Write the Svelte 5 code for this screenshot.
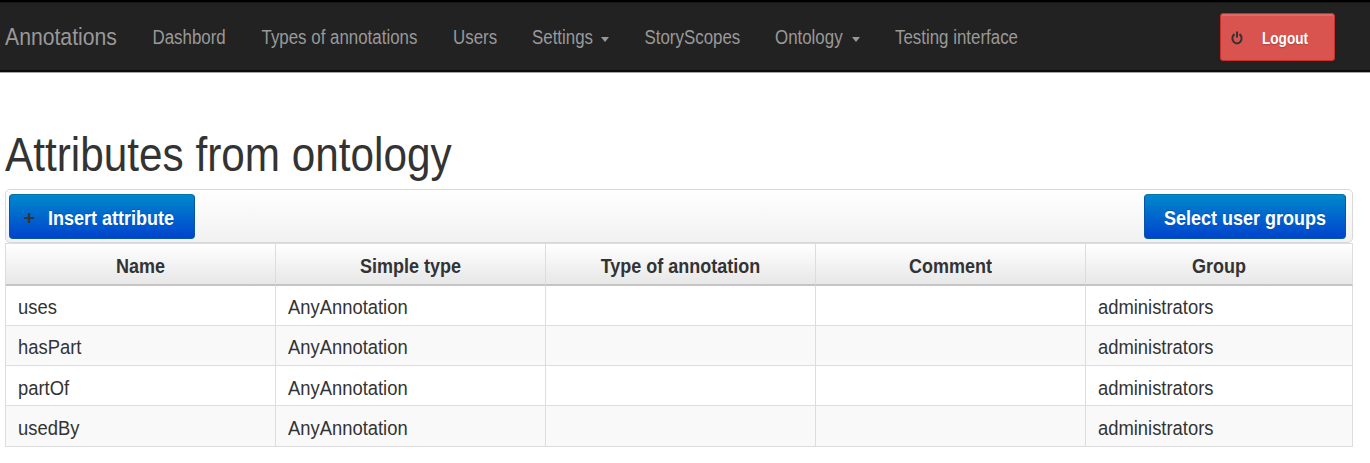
<script>
  const links = [
    { label: 'Dashbord', width: 73.5 },
    { label: 'Types of annotations', width: 156 },
    { label: 'Users', width: 43.5 },
    { label: 'Settings', width: 77, menu: true },
    { label: 'StoryScopes', width: 95 },
    { label: 'Ontology', width: 84.5, menu: true },
    { label: 'Testing interface', width: 124 }
  ];
  const columns = ['Name', 'Simple type', 'Type of annotation', 'Comment', 'Group'];
  const names = ['uses', 'hasPart', 'partOf', 'usedBy'];
</script>

<nav>
  <a class="brand"><span class="t">Annotations</span></a>
  <div class="links">
    {#each links as link}
      <a style="width: {link.width}px"><span class="t">{link.label}</span>{#if link.menu}<i class="caret"></i>{/if}</a>
    {/each}
  </div>
  <button class="logout">
    <svg width="12" height="14" viewBox="0 0 12 14" preserveAspectRatio="none">
      <path d="M3.5 3.1A4.6 5.1 0 1 0 8.5 3.1M6 .5V6.6" fill="none" stroke="#333" stroke-width="2" />
    </svg>
    <span class="t">Logout</span>
  </button>
</nav>

<main>
  <h1><span class="t">Attributes from ontology</span></h1>
  <div class="toolbar">
    <button class="blue insert">
      <svg width="10" height="12" viewBox="0 0 10 12"><path d="M5 1V11M0 6H10" stroke="#333" stroke-width="2.2" /></svg>
      <span class="t">Insert attribute</span>
    </button>
    <button class="blue select"><span class="t">Select user groups</span></button>
  </div>
  <div class="table">
    <div class="row head">
      {#each columns as column}<div><span class="t">{column}</span></div>{/each}
    </div>
    {#each names as name}
      <div class="row">
        <div><span class="t">{name}</span></div>
        <div><span class="t">AnyAnnotation</span></div>
        <div></div>
        <div></div>
        <div><span class="t">administrators</span></div>
      </div>
    {/each}
  </div>
</main>

<style>
  :global(body) {
    margin: 0;
    background: #fff;
    color: #333;
    font-family: "Liberation Sans", Arial, sans-serif;
  }
  .t {
    display: inline-block;
    white-space: nowrap;
    line-height: 24px;
    transform: scaleY(1.16);
  }
  nav {
    box-sizing: border-box;
    height: 73px;
    border-top: 2px solid #000;
    border-bottom: 1px solid #a5a5a5;
    box-shadow: inset 0 -2px #0b0b0b, inset 0 1px #151515;
    background: #222;
    color: #999;
    display: flex;
    align-items: center;
    padding: 0 35px 0 5px;
  }
  .brand {
    width: 147.5px;
    font-size: 21.2px;
  }
  .links {
    display: flex;
    gap: 35.5px;
    font-size: 16.9px;
    flex: 1;
    padding-top: 2px;
  }
  .links a {
    display: flex;
    justify-content: space-between;
    align-items: center;
    flex: none;
  }
  .caret {
    border: 4.5px solid transparent;
    border-top: 5px solid #999;
    border-bottom: 0;
    margin-top: 3px;
  }
  button {
    box-sizing: border-box;
    font: inherit;
    display: flex;
    align-items: center;
    margin: 0;
  }
  .logout {
    width: 115px;
    height: 48px;
    border: 1px solid #c9302c;
    border-radius: 3px;
    background: #d9534f;
    box-shadow: inset 0 2px #e06a66;
    color: #fff;
    font-size: 13.6px;
    font-weight: bold;
    text-shadow: 0 1px 1px #a94442;
    padding: 4px 0 0 10px;
    gap: 19px;
  }
  .logout .t {
    transform: scaleY(1.22);
  }
  .logout svg {
    margin-top: -3px;
  }
  main {
    padding: 0 17px 0 5px;
  }
  h1 {
    margin: 0;
    height: 116px;
    box-sizing: border-box;
    padding-top: 58px;
    font-size: 42.3px;
    font-weight: normal;
  }
  h1 .t {
    line-height: 48px;
    display: block;
    width: max-content;
    transform: scaleY(1.13);
  }
  .toolbar {
    box-sizing: border-box;
    height: 54px;
    border: 1px solid #d8d8d8;
    border-radius: 5px;
    background: linear-gradient(#fff, #f1f1f1);
    display: flex;
    justify-content: space-between;
    padding: 4px 6px 0 3px;
  }
  .blue {
    height: 45px;
    border: 1px solid #0755a8;
    border-top-color: #0870aa;
    border-radius: 4px;
    background: linear-gradient(#08c, #04c);
    color: #fff;
    font-size: 18px;
    font-weight: bold;
    padding: 2px 0 0;
    text-shadow: 0 -1px rgba(0, 0, 0, .2);
  }
  .blue .t {
    transform: scaleY(1.14);
  }
  .insert {
    width: 186px;
    padding-left: 14px;
    gap: 14px;
  }
  .select {
    width: 202px;
    justify-content: center;
  }
  .table {
    border: 1px solid #ddd;
    border-width: 1px 0 0 1px;
  }
  .row {
    display: grid;
    grid-template-columns: 270px 270px 270px 270px 1fr;
    height: 40.3px;
    font-size: 18.4px;
  }
  .row > div {
    box-sizing: border-box;
    display: flex;
    align-items: center;
    padding: 6px 0 0 12px;
    border-right: 1px solid #ddd;
    border-bottom: 1px solid #ddd;
  }
  .row .t {
    transform: scaleY(1.08);
  }
  .row:nth-child(odd) {
    background: #f9f9f9;
  }
  .row.head {
    height: 41.5px;
    font-size: 18px;
    font-weight: bold;
    background: linear-gradient(#fff, #e6e6e6);
  }
  .row.head > div {
    justify-content: center;
    padding: 4px 0 0;
    border-bottom: 2px solid #c4c4c4;
  }
  .head .t {
    transform: scaleY(1.14);
  }
</style>
